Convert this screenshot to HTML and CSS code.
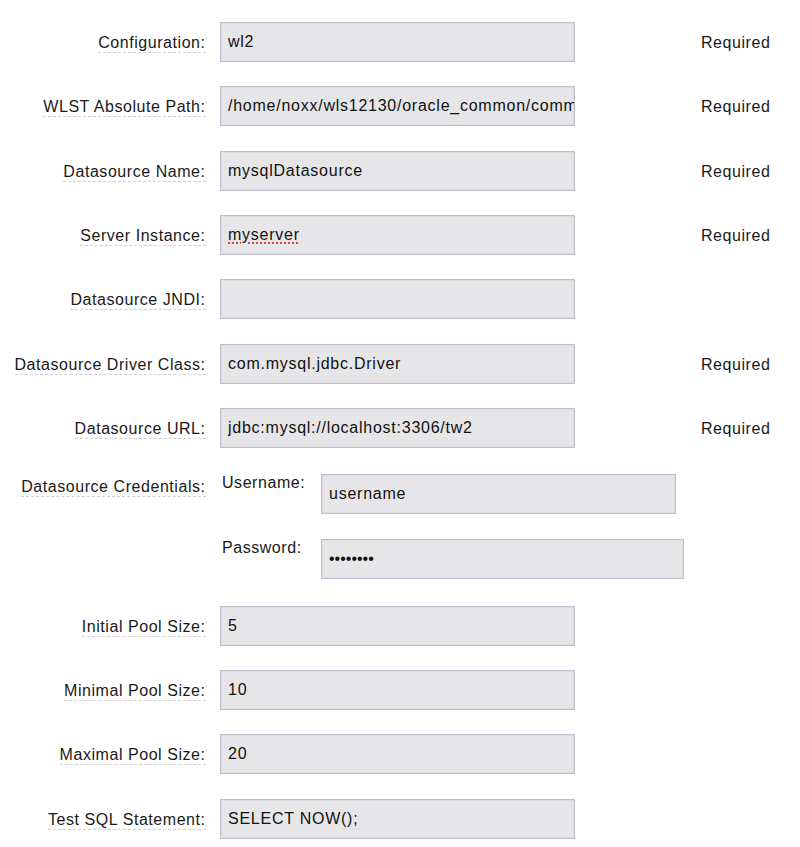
FILE: index.html
```html
<!DOCTYPE html>
<html>
<head>
<meta charset="utf-8">
<link rel="stylesheet" href="styles.css">
</head>
<body>
<form class="form">
  <div class="row">
    <div class="label"><span class="tip">Configuration:</span></div>
    <div class="field"><input class="input" type="text" value="wl2"></div>
    <div class="req">Required</div>
  </div>
  <div class="row">
    <div class="label"><span class="tip">WLST Absolute Path:</span></div>
    <div class="field"><input class="input" type="text" value="/home/noxx/wls12130/oracle_common/common/bin/wlst.sh"></div>
    <div class="req">Required</div>
  </div>
  <div class="row">
    <div class="label"><span class="tip">Datasource Name:</span></div>
    <div class="field"><input class="input" type="text" value="mysqlDatasource"></div>
    <div class="req">Required</div>
  </div>
  <div class="row">
    <div class="label"><span class="tip">Server Instance:</span></div>
    <div class="field"><input class="input spell" type="text" value="myserver"></div>
    <div class="req">Required</div>
  </div>
  <div class="row">
    <div class="label"><span class="tip">Datasource JNDI:</span></div>
    <div class="field"><input class="input" type="text" value=""></div>
    <div class="req"></div>
  </div>
  <div class="row">
    <div class="label"><span class="tip">Datasource Driver Class:</span></div>
    <div class="field"><input class="input" type="text" value="com.mysql.jdbc.Driver"></div>
    <div class="req">Required</div>
  </div>
  <div class="row">
    <div class="label"><span class="tip">Datasource URL:</span></div>
    <div class="field"><input class="input" type="text" value="jdbc:mysql://localhost:3306/tw2"></div>
    <div class="req">Required</div>
  </div>
  <div class="row cred">
    <div class="label cred-label"><span class="tip">Datasource Credentials:</span></div>
    <div class="subgrid">
      <div class="sublabel">Username:</div>
      <input class="input user" type="text" value="username">
      <div class="sublabel">Password:</div>
      <input class="input pass" type="password" value="password">
    </div>
  </div>
  <div class="row">
    <div class="label"><span class="tip">Initial Pool Size:</span></div>
    <div class="field"><input class="input" type="text" value="5"></div>
    <div class="req"></div>
  </div>
  <div class="row">
    <div class="label"><span class="tip">Minimal Pool Size:</span></div>
    <div class="field"><input class="input" type="text" value="10"></div>
    <div class="req"></div>
  </div>
  <div class="row">
    <div class="label"><span class="tip">Maximal Pool Size:</span></div>
    <div class="field"><input class="input" type="text" value="20"></div>
    <div class="req"></div>
  </div>
  <div class="row">
    <div class="label"><span class="tip">Test SQL Statement:</span></div>
    <div class="field"><input class="input" type="text" value="SELECT NOW();"></div>
    <div class="req"></div>
  </div>
</form>
</body>
</html>
```
FILE: styles.css
```css
html, body {
  margin: 0;
  padding: 0;
  background: #ffffff;
}
body {
  font-family: "Liberation Sans", Arial, Helvetica, sans-serif;
  font-size: 16px;
  letter-spacing: 0.55px;
  color: #1a1a1a;
}
.form {
  display: flex;
  flex-direction: column;
  gap: 24.33px;
  padding-top: 22px;
}
.row {
  display: grid;
  grid-template-columns: 220px 481px auto;
  align-items: center;
  height: 40px;
}
.label {
  text-align: right;
  padding-right: 15px;
  line-height: 19px;
  padding-top: 2px;
}
.tip {
  display: inline-block;
  border-bottom: 1px dashed #cfcfcf;
  line-height: 19px;
  margin-right: -0.55px;
}
.field {
  display: flex;
}
.input {
  box-sizing: border-box;
  width: 355px;
  height: 40px;
  margin: 0;
  padding: 0 0 0 7px;
  border: 1px solid #bdbdcb;
  box-shadow: inset 0 0 0 1px #dcdce1;
  background: #e6e6e8;
  font-family: "Liberation Sans", Arial, Helvetica, sans-serif;
  font-size: 16px;
  letter-spacing: 0.75px;
  color: #111;
  outline: none;
  border-radius: 0;
}
.spell {
  text-decoration: underline dotted #e0413a;
  text-decoration-thickness: 2px;
  text-underline-offset: 3px;
}
.req {
  color: #1a1a1a;
  padding-top: 2px;
}
.cred {
  height: auto;
  align-items: start;
  margin-top: 2px;
  margin-bottom: 2px;
}
.cred-label {
  padding-top: 3px;
}
.subgrid {
  display: grid;
  grid-template-columns: 101px auto;
  row-gap: 25px;
  align-items: start;
}
.sublabel {
  padding-left: 2px;
  line-height: 19px;
  margin-top: -1px;
}
.user {
  width: 355px;
}
.pass {
  width: 363px;
  letter-spacing: 0;
}
```
